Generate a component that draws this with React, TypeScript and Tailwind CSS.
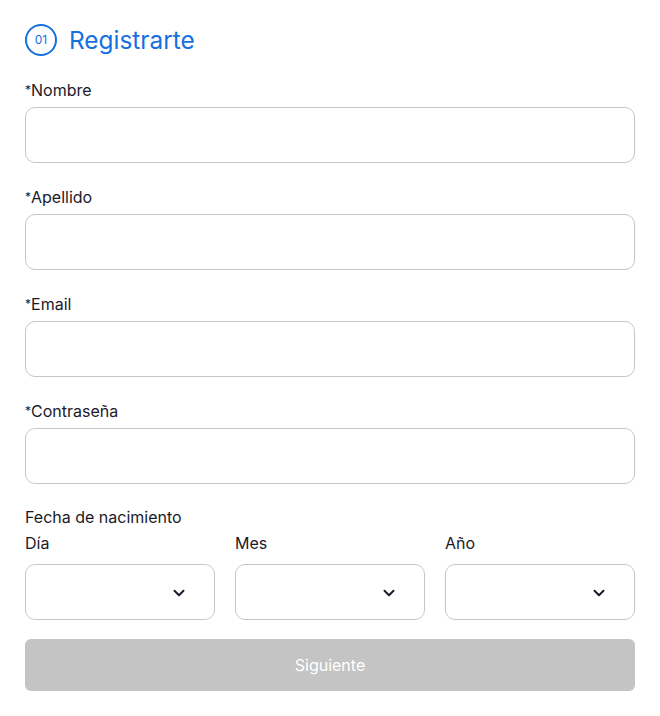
import React from "react";

function Field({ label }: { label: string }) {
  return (
    <div className="flex flex-col">
      <label className="text-[16px] leading-[24px] text-[#1b1a29]">
        <span className="text-[12px] align-[2px]">*</span>
        {label}
      </label>
      <div className="mt-[5px] h-[56px] rounded-[10px] border border-[#c6c5cf] bg-white" />
    </div>
  );
}

function Select({ label }: { label: string }) {
  return (
    <div className="flex flex-col">
      <span className="text-[16px] leading-[24px] text-[#1b1a29]">{label}</span>
      <div className="mt-[9px] h-[56px] rounded-[10px] border border-[#c6c5cf] bg-white flex items-center justify-end pr-[29px]">
        <svg width="12" height="8" viewBox="0 0 12 8" fill="none" className="mt-[1px]">
          <path d="M1.5 1.8L6 6.2L10.5 1.8" stroke="#1b1a29" strokeWidth="2" strokeLinecap="round" strokeLinejoin="round" />
        </svg>
      </div>
    </div>
  );
}

export default function App() {
  return (
    <div className="min-h-[716px] bg-white px-[25px] pt-[24px]" style={{ fontFamily: "Inter, 'Noto Sans', sans-serif" }}>
      <div className="flex items-center h-[32px]">
        <div className="w-[32px] h-[32px] rounded-full border-2 border-[#1570e0] flex items-center justify-center text-[12px] text-[#1570e0]">
          01
        </div>
        <h1 className="ml-[12px] text-[24.4px] text-[#1570e0] leading-[32px]">Registrarte</h1>
      </div>
      <div className="mt-[22px] flex flex-col gap-[22px]">
        <Field label="Nombre" />
        <Field label="Apellido" />
        <Field label="Email" />
        <Field label="Contraseña" />
      </div>
      <div className="mt-[21px]">
        <div className="text-[16px] leading-[24px] text-[#1b1a29]">Fecha de nacimiento</div>
        <div className="mt-[2px] grid grid-cols-3 gap-[20px]">
          <Select label="Día" />
          <Select label="Mes" />
          <Select label="Año" />
        </div>
      </div>
      <button className="mt-[19px] w-full h-[52px] rounded-[6px] bg-[#c4c4c4] text-white text-[16px]">
        Siguiente
      </button>
    </div>
  );
}
